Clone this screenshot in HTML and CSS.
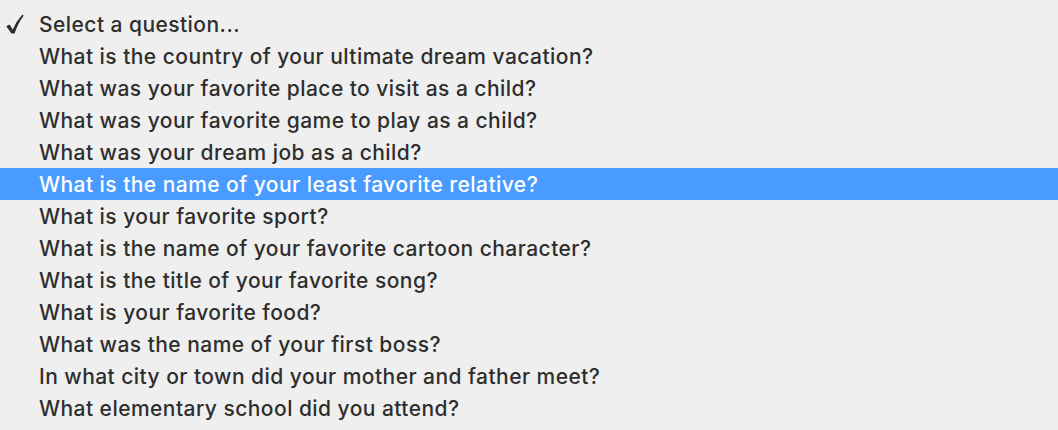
FILE: index.html
```html
<!DOCTYPE html>
<html lang="en">
<head>
    <meta charset="UTF-8">
    <title>Security question</title>
    <link rel="stylesheet" href="styles.css">
</head>
<body>
    <ul class="menu">
        <li class="item checked">
            <span class="mark">
                <svg width="18" height="20" viewBox="0 0 18 20"><path d="M0.3 12.2 L3.6 10.4 L6.8 15.4 Q10.2 7.2 16.4 0.5 L17.7 1.7 Q12 9 8.6 19.6 L5.4 19.6 Z" fill="#2e2e2e"/></svg>
            </span>
            Select a question...
        </li>
        <li class="item">What is the country of your ultimate dream vacation?</li>
        <li class="item">What was your favorite place to visit as a child?</li>
        <li class="item">What was your favorite game to play as a child?</li>
        <li class="item">What was your dream job as a child?</li>
        <li class="item active">What is the name of your least favorite relative?</li>
        <li class="item">What is your favorite sport?</li>
        <li class="item">What is the name of your favorite cartoon character?</li>
        <li class="item">What is the title of your favorite song?</li>
        <li class="item">What is your favorite food?</li>
        <li class="item">What was the name of your first boss?</li>
        <li class="item">In what city or town did your mother and father meet?</li>
        <li class="item">What elementary school did you attend?</li>
    </ul>
</body>
</html>
```

FILE: styles.css
```css
body {
    margin: 0;
    background-color: #efefef;
    font-family: Inter, "Open Sans", sans-serif;
}
.menu {
    list-style: none;
    margin: 0;
    padding: 8px 0 6px;
}
.item {
    position: relative;
    height: 32px;
    line-height: 34px;
    padding-left: 39px;
    font-size: 21px;
    font-weight: 500;
    letter-spacing: 0.45px;
    color: #2e2e2e;
}
.item.active {
    background-color: #4a9bff;
    color: #fff;
}
.mark {
    position: absolute;
    left: 6px;
    top: 6px;
    width: 18px;
    height: 20px;
}
.mark svg {
    display: block;
}
```
